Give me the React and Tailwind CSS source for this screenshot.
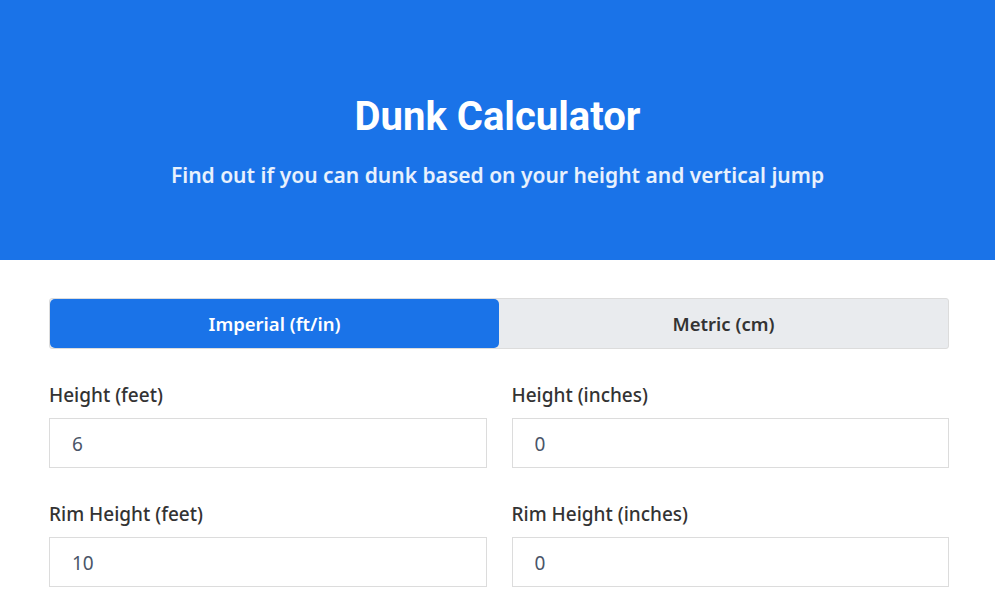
import { useState } from 'react';

const fieldsImperial = [
  [
    { label: 'Height (feet)', value: '6' },
    { label: 'Height (inches)', value: '0' },
  ],
  [
    { label: 'Rim Height (feet)', value: '10' },
    { label: 'Rim Height (inches)', value: '0' },
  ],
];

function Field({ label, value }) {
  const [val, setVal] = useState(value);
  return (
    <div className="flex flex-col">
      <label className="text-[19px] leading-[27px] font-medium text-[#333] mb-[9px]">{label}</label>
      <input
        type="number"
        value={val}
        onChange={e => setVal(e.target.value)}
        className="h-[50px] w-full border border-[#dcdcdc] bg-white px-[22px] pt-[2px] text-[19px] text-[#4a5568] outline-none"
      />
    </div>
  );
}

export default function App() {
  const [unit, setUnit] = useState('imperial');

  return (
    <div className="min-h-screen bg-white font-['Noto_Sans',sans-serif]">
      <header className="h-[260px] bg-[#1a73e8] flex flex-col items-center pt-[93px] text-white">
        <h1 className="font-['Roboto',sans-serif] font-bold text-[40px] leading-[48px]">Dunk Calculator</h1>
        <p className="mt-[19px] text-[21px] leading-[30px] font-semibold text-white/90">
          Find out if you can dunk based on your height and vertical jump
        </p>
      </header>

      <main className="w-[900px] ml-[49px] pt-[38px]">
        <div className="flex h-[51px] border border-[#dcdcdc] bg-[#e9ebee] rounded-[3px]">
          <button
            onClick={() => setUnit('imperial')}
            className={`flex-1 rounded-[5px] text-[18.5px] font-semibold ${
              unit === 'imperial' ? 'bg-[#1a73e8] text-white' : 'text-[#333]'
            }`}
          >
            Imperial (ft/in)
          </button>
          <button
            onClick={() => setUnit('metric')}
            className={`flex-1 rounded-[5px] text-[18.5px] font-semibold ${
              unit === 'metric' ? 'bg-[#1a73e8] text-white' : 'text-[#333]'
            }`}
          >
            Metric (cm)
          </button>
        </div>

        <div className="mt-[33px] flex flex-col gap-[33px]">
          {fieldsImperial.map((row, i) => (
            <div key={i} className="grid grid-cols-2 gap-[25px]">
              {row.map(f => (
                <Field key={f.label} label={f.label} value={f.value} />
              ))}
            </div>
          ))}
        </div>
      </main>
    </div>
  );
}
